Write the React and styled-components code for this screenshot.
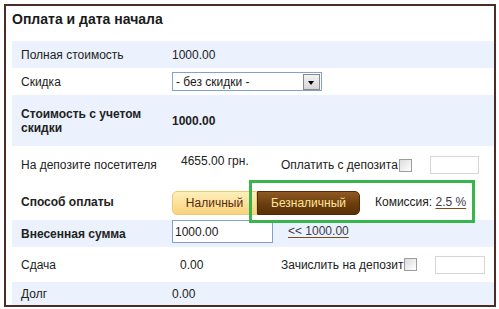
import React from 'react';
import styled, { createGlobalStyle } from 'styled-components';

const Global = createGlobalStyle`
    html, body {
        margin: 0;
        padding: 0;
        background: #ffffff;
    }
    body {
        font-family: "Liberation Sans", Arial, sans-serif;
        font-size: 12px;
        color: #222222;
    }
`

const App = () => {
    return (
        <>
            <Global />
            <Frame>
                <Title>Оплата и дата начала</Title>

                <Row tinted height={27}>
                    <Label>Полная стоимость</Label>
                    <Value>1000.00</Value>
                </Row>

                <Row height={27}>
                    <Label>Скидка</Label>
                    <Select>
                        <span>- без скидки -</span>
                        <SelectArrow />
                    </Select>
                </Row>

                <Row tinted height={51}>
                    <Label bold>Стоимость с учетом скидки</Label>
                    <Value bold>1000.00</Value>
                </Row>

                <Row height={38}>
                    <Label>На депозите посетителя</Label>
                    <Value shift={9} lift={4}>4655.00 грн.</Value>
                    <Extra>
                        Оплатить с депозита
                        <Check />
                        <SmallInput width={49} />
                    </Extra>
                </Row>

                <Row height={36}>
                    <Label bold>Способ оплаты</Label>
                    <Toggle>
                        <PayButton side="left">Наличный</PayButton>
                        <PayButton side="right" active>Безналичный</PayButton>
                    </Toggle>
                    <Commission>
                        Комиссия: <Link>2.5 %</Link>
                    </Commission>
                </Row>

                <Row tinted height={27}>
                    <Label bold>Внесенная сумма</Label>
                    <AmountInput>1000.00</AmountInput>
                    <Link gap={15} lift={3}>&lt;&lt; 1000.00</Link>
                </Row>

                <Row height={35}>
                    <Label>Сдача</Label>
                    <Value shift={8}>0.00</Value>
                    <Extra>
                        Зачислить на депозит
                        <Check />
                        <SmallInput width={50} />
                    </Extra>
                </Row>

                <Row tinted height={23}>
                    <Label>Долг</Label>
                    <Value>0.00</Value>
                </Row>

                <Highlight />
            </Frame>
        </>
    );
};

const Frame = styled.div`
    position: relative;
    margin: 4px;
    width: 492px;
    box-sizing: border-box;
    border: 2px solid #4b2c26;
    padding-left: 6px;
    background: #ffffff;
`

const Title = styled.div`
    height: 35px;
    padding-top: 5px;
    box-sizing: border-box;
    font-size: 14px;
    line-height: 16px;
    font-weight: bold;
    color: #1a1a1a;
`

const Row = styled.div`
    display: flex;
    align-items: center;
    height: ${p => p.height}px;
    background: ${p => (p.tinted ? '#ebf2fd' : '#ffffff')};
`

const Label = styled.div`
    width: 160px;
    flex: none;
    box-sizing: border-box;
    padding-left: 9px;
    padding-right: 12px;
    line-height: 14px;
    font-weight: ${p => (p.bold ? 'bold' : 'normal')};
`

const Value = styled.div`
    width: 108px;
    flex: none;
    box-sizing: border-box;
    padding-left: ${p => p.shift || 0}px;
    margin-top: ${p => -(p.lift || 0) * 2}px;
    font-weight: ${p => (p.bold ? 'bold' : 'normal')};
`

const Select = styled.div`
    width: 150px;
    height: 19px;
    box-sizing: border-box;
    border: 1px solid #7ea3d0;
    display: flex;
    align-items: center;
    justify-content: space-between;
    padding-left: 3px;
    padding-right: 1px;
    font-size: 12px;
    color: #1a1a1a;
`

const SelectArrow = styled.span`
    width: 17px;
    height: 16px;
    box-sizing: border-box;
    border: 1px solid #8a8a8a;
    background: linear-gradient(#f2f2f2, #d6d6d6);
    position: relative;
    &::after {
        content: '';
        position: absolute;
        left: 4px;
        top: 6px;
        border-left: 3.5px solid transparent;
        border-right: 3.5px solid transparent;
        border-top: 4px solid #000000;
    }
`

const Extra = styled.div`
    display: flex;
    align-items: center;
    padding-left: 1px;
`

const Check = styled.span`
    width: 13px;
    height: 13px;
    box-sizing: border-box;
    margin-left: 1px;
    border: 1px solid #9c9c9c;
    background: linear-gradient(135deg, #dcdcdc, #ffffff);
`

const SmallInput = styled.span`
    width: ${p => p.width}px;
    height: 18px;
    box-sizing: border-box;
    margin-left: 18px;
    border: 1px solid #d6d6d6;
    background: #ffffff;
`

const Toggle = styled.div`
    display: flex;
    margin-top: 1px;
`

const PayButton = styled.div`
    height: 24px;
    box-sizing: border-box;
    display: flex;
    align-items: center;
    justify-content: center;
    font-size: 12px;
    width: ${p => (p.active ? 103 : 85)}px;
    margin-left: ${p => (p.active ? 0 : 0)}px;
    border-radius: ${p => (p.side === 'left' ? '5px 0 0 5px' : '0 5px 5px 0')};
    color: ${p => (p.active ? '#fde59a' : '#5a2613')};
    background: ${p => (p.active
        ? 'linear-gradient(#8f5a22, #6b3d0e 55%, #5a3006)'
        : 'linear-gradient(#fdefbb, #fbe29a 50%, #f7d37c)')};
    border: 1px solid ${p => (p.active ? '#4e2a08' : '#efc972')};
`

const Commission = styled.div`
    margin-left: 15px;
    color: #222222;
`

const Link = styled.span`
    color: #3a3a4a;
    text-decoration: underline;
    text-decoration-color: #7a4a1e;
    text-underline-offset: 2px;
    margin-left: ${p => p.gap || 0}px;
    margin-top: ${p => -(p.lift || 0) * 2}px;
`

const AmountInput = styled.div`
    width: 101px;
    height: 23px;
    align-self: flex-start;
    box-sizing: border-box;
    border: 1px solid #7ea3d0;
    background: #ffffff;
    padding-left: 2px;
    display: flex;
    align-items: center;
    color: #1a1a1a;
`

const Highlight = styled.div`
    position: absolute;
    left: 243px;
    top: 174px;
    width: 226px;
    height: 43px;
    box-sizing: border-box;
    border: 3px solid #38b54c;
    pointer-events: none;
`

export default App;
